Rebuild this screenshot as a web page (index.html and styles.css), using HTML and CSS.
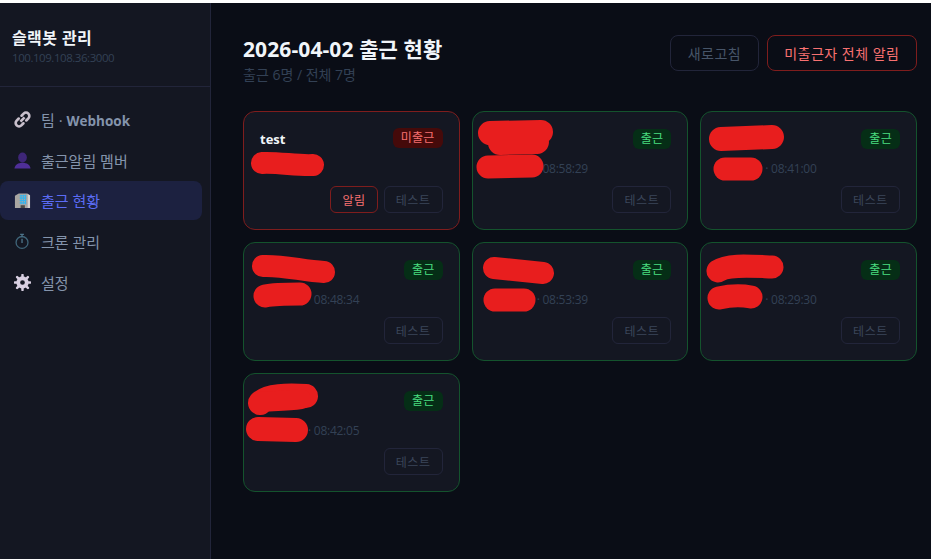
FILE: index.html
```html
<!DOCTYPE html>
<html lang="ko">
<head>
    <meta charset="utf-8">
    <title>슬랙봇 관리</title>
    <link rel="stylesheet" href="styles.css">
</head>
<body>
<div class="topline"></div>
<div class="app">
    <aside class="sidebar">
        <div class="brand">
            <div class="brand-name">슬랙봇 관리</div>
            <div class="brand-host">100.109.108.36:3000</div>
        </div>
        <nav class="nav">
            <a class="nav-item">
                <svg class="nav-icon" viewBox="0 0 18 18">
                    <path d="M6.800 11.200 11.200 6.800" fill="none" stroke="#c9c0cc" stroke-width="2.800"/>
                    <path d="M8 5 10.200 2.800a3.200 3.200 0 0 1 5 5L13 10M10 13 7.800 15.200a3.200 3.200 0 0 1-5-5L5 8" fill="none" stroke="#c9c0cc" stroke-width="2.800" stroke-linecap="round"/>
                </svg>
                <span>팀 · <b>Webhook</b></span>
            </a>
            <a class="nav-item">
                <svg class="nav-icon" viewBox="0 0 18 18">
                    <ellipse cx="9" cy="5.800" rx="4.600" ry="5.300" fill="#3e2678"/>
                    <path d="M.5 17.500c.5-3.800 3.800-6 8.500-6s8 2.200 8.500 6z" fill="#4f2f98"/>
                </svg>
                <span>출근알림 멤버</span>
            </a>
            <a class="nav-item active">
                <svg class="nav-icon" viewBox="0 0 18 18">
                    <path d="M1 4 5 1.500h9V17H1z" fill="#a9a6a2"/>
                    <path d="M14 1.500 17 3.500V17h-3z" fill="#d6d3cf"/>
                    <path d="M6 4h7M6 6.500h7M6 9h7M6 11.500h7M7.500 3v10M10 3v10M12.200 3v10" stroke="#35b4ee" stroke-width="1.100" fill="none"/>
                    <rect x="7" y="14" width="4.500" height="3" fill="#4b4a48"/>
                </svg>
                <span>출근 현황</span>
            </a>
            <a class="nav-item">
                <svg class="nav-icon" viewBox="0 0 18 18">
                    <circle cx="8.500" cy="10" r="6.300" fill="none" stroke="#3f6478" stroke-width="1.400"/>
                    <path d="M8.500 1.500v3M6.500 1.500h4M8.500 6v4.500" fill="none" stroke="#4d7389" stroke-width="1.400"/>
                </svg>
                <span>크론 관리</span>
            </a>
            <a class="nav-item">
                <svg class="nav-icon" viewBox="0 0 18 18">
                    <path d="M9 4.500a4.500 4.500 0 1 0 0 9 4.500 4.500 0 0 0 0-9z" fill="none" stroke="#d9d0e2" stroke-width="4"/>
                    <path d="M9 1v3M9 14v3M1 9h3M14 9h3M3.300 3.300l2.200 2.200M12.500 12.500l2.200 2.200M14.700 3.300l-2.200 2.200M5.500 12.500l-2.200 2.200" stroke="#d9d0e2" stroke-width="2.600" stroke-linecap="round"/>
                </svg>
                <span>설정</span>
            </a>
        </nav>
    </aside>

    <main class="main">
        <header class="page-head">
            <div>
                <h1 class="page-title">2026-04-02 출근 현황</h1>
                <p class="page-sub">출근 6명 / 전체 7명</p>
            </div>
            <div class="page-actions">
                <button class="btn">새로고침</button>
                <button class="btn btn-danger">미출근자 전체 알림</button>
            </div>
        </header>

        <section class="cards">
            <article class="card card-absent">
                <div class="card-head">
                    <span class="card-name">test</span>
                    <span class="badge badge-absent">미출근</span>
                </div>
                <div class="card-meta"></div>
                <div class="card-actions">
                    <button class="btn-small btn-small-danger">알림</button>
                    <button class="btn-small">테스트</button>
                </div>
                <svg class="redact">
                    <path d="M19 52C35 51 55 55 70 54" stroke-width="22"/>
                </svg>
            </article>

            <article class="card card-in">
                <div class="card-head">
                    <span class="card-name"></span>
                    <span class="badge badge-in">출근</span>
                </div>
                <div class="card-meta"><span class="meta-who"></span>· 08:58:29</div>
                <div class="card-actions">
                    <button class="btn-small">테스트</button>
                </div>
                <svg class="redact">
                    <path d="M18 22 69 21M28 32 65 31" stroke-width="24"/>
                    <path d="M16 56 60 55" stroke-width="23"/>
                </svg>
            </article>

            <article class="card card-in">
                <div class="card-head">
                    <span class="card-name"></span>
                    <span class="badge badge-in">출근</span>
                </div>
                <div class="card-meta"><span class="meta-who"></span>· 08:41:00</div>
                <div class="card-actions">
                    <button class="btn-small">테스트</button>
                </div>
                <svg class="redact">
                    <path d="M21 28 72 26" stroke-width="24"/>
                    <path d="M25 58 51 58" stroke-width="23"/>
                </svg>
            </article>

            <article class="card card-in">
                <div class="card-head">
                    <span class="card-name"></span>
                    <span class="badge badge-in">출근</span>
                </div>
                <div class="card-meta"><span class="meta-who"></span>· 08:48:34</div>
                <div class="card-actions">
                    <button class="btn-small">테스트</button>
                </div>
                <svg class="redact">
                    <path d="M20 24C40 23 60 29 81 30" stroke-width="22"/>
                    <path d="M22 54C32 52 45 52 57 52" stroke-width="23"/>
                </svg>
            </article>

            <article class="card card-in">
                <div class="card-head">
                    <span class="card-name"></span>
                    <span class="badge badge-in">출근</span>
                </div>
                <div class="card-meta"><span class="meta-who"></span>· 08:53:39</div>
                <div class="card-actions">
                    <button class="btn-small">테스트</button>
                </div>
                <svg class="redact">
                    <path d="M22 26 71 31" stroke-width="22"/>
                    <path d="M23 58 52 58" stroke-width="23"/>
                </svg>
            </article>

            <article class="card card-in">
                <div class="card-head">
                    <span class="card-name"></span>
                    <span class="badge badge-in">출근</span>
                </div>
                <div class="card-meta"><span class="meta-who"></span>· 08:29:30</div>
                <div class="card-actions">
                    <button class="btn-small">테스트</button>
                </div>
                <svg class="redact">
                    <path d="M18 29C28 22 50 24 72 25" stroke-width="23"/>
                    <path d="M19 56C28 54 40 53 51 55" stroke-width="23"/>
                </svg>
            </article>

            <article class="card card-in">
                <div class="card-head">
                    <span class="card-name"></span>
                    <span class="badge badge-in">출근</span>
                </div>
                <div class="card-meta"><span class="meta-who"></span>· 08:42:05</div>
                <div class="card-actions">
                    <button class="btn-small">테스트</button>
                </div>
                <svg class="redact">
                    <path d="M17 30C24 22 45 22 63 23" stroke-width="24"/>
                    <path d="M16 29C30 28 45 28 58 26" stroke-width="20"/>
                    <path d="M15 56 53 57" stroke-width="24"/>
                </svg>
            </article>
        </section>
    </main>
</div>
</body>
</html>
```

FILE: styles.css
```css
* {
    box-sizing: border-box;
}

html, body {
    height: 100%;
}

body {
    margin: 0;
    background-color: #0a0d16;
    font-family: "Open Sans", "Noto Sans CJK KR", sans-serif;
    overflow: hidden;
}

.topline {
    height: 3px;
    background-color: #ffffff;
}

.app {
    display: flex;
    height: 556px;
}

.sidebar {
    flex: 0 0 211px;
    background-color: #141722;
    border-right: 1px solid #22253a;
}

.brand {
    height: 84px;
    padding: 25px 12px 0;
    border-bottom: 1px solid #22253a;
}

.brand-name {
    color: #f1f5f9;
    font-size: 16px;
    font-weight: 700;
    line-height: 20px;
    letter-spacing: 0.4px;
}

.brand-host {
    margin-top: 2px;
    color: #334155;
    font-size: 11.5px;
    line-height: 16px;
    letter-spacing: -0.45px;
}

.nav {
    display: flex;
    flex-direction: column;
    gap: 2px;
    padding: 13px 8px 0 0;
}

.nav-item {
    display: flex;
    align-items: center;
    gap: 10px;
    height: 38.7px;
    padding-left: 14px;
    border-radius: 8px;
    color: #8494ac;
    font-size: 15px;
}

.nav-item b {
    font-size: 13.5px;
    font-weight: 700;
}

.nav-item.active {
    background-color: #1c2140;
    color: #5b6cf5;
}

.nav-icon {
    flex: 0 0 17px;
    width: 17px;
    height: 17px;
}

.main {
    flex: 1;
    padding: 32px 14px 0 32px;
}

.page-head {
    display: flex;
    justify-content: space-between;
    align-items: flex-start;
    height: 76px;
}

.page-title {
    margin: 0;
    color: #f1f5f9;
    font-size: 21px;
    font-weight: 700;
    line-height: 28px;
    letter-spacing: 0.1px;
}

.page-sub {
    margin: 3px 0 0;
    color: #334155;
    font-size: 14px;
    line-height: 18px;
}

.page-actions {
    display: flex;
    gap: 8px;
}

.btn {
    height: 36px;
    padding: 0 16.5px;
    background: none;
    border: 1px solid #22253a;
    border-radius: 8px;
    color: #475569;
    font-family: inherit;
    font-size: 14px;
    letter-spacing: 0.5px;
}

.btn-danger {
    border-color: #7f1d1d;
    color: #f87171;
}

.cards {
    display: grid;
    grid-template-columns: repeat(3, 1fr);
    gap: 12px;
}

.card {
    position: relative;
    padding: 16px;
    background-color: #141722;
    border: 1px solid #22253a;
    border-radius: 12px;
}

.card-in {
    border-color: #14532d;
}

.card-absent {
    border-color: #7f1d1d;
}

.card-head {
    display: flex;
    justify-content: space-between;
    align-items: center;
    height: 20px;
}

.card-name {
    margin-top: 2px;
    color: #f1f5f9;
    font-size: 13px;
    font-weight: 700;
}

.badge {
    padding: 0 8px;
    border-radius: 6px;
    font-size: 12px;
    line-height: 20px;
    letter-spacing: 0.3px;
}

.badge-in {
    margin-top: 2px;
    background-color: #052e16;
    color: #4ade80;
}

.badge-absent {
    background-color: #450a0a;
    color: #f87171;
}

.card-meta {
    display: flex;
    margin-top: 12px;
    height: 18px;
    color: #334155;
    font-size: 12px;
    line-height: 18px;
    letter-spacing: -0.25px;
    white-space: pre;
}

.meta-who {
    width: 48px;
}

.card-actions {
    display: flex;
    justify-content: flex-end;
    gap: 6px;
    margin-top: 8px;
}

.btn-small {
    height: 27px;
    padding: 0 11px;
    background: none;
    border: 1px solid #22253a;
    border-radius: 6px;
    color: #3b465a;
    font-family: inherit;
    font-size: 12px;
    letter-spacing: 0.6px;
}

.btn-small-danger {
    border-color: #7f1d1d;
    color: #f87171;
}

/* hand drawn marks over the names */
.redact {
    position: absolute;
    top: -1px;
    left: -1px;
    width: 217px;
    height: 119px;
    overflow: visible;
    pointer-events: none;
}

.redact path {
    fill: none;
    stroke: #e81e1e;
    stroke-linecap: round;
    stroke-linejoin: round;
}
```
